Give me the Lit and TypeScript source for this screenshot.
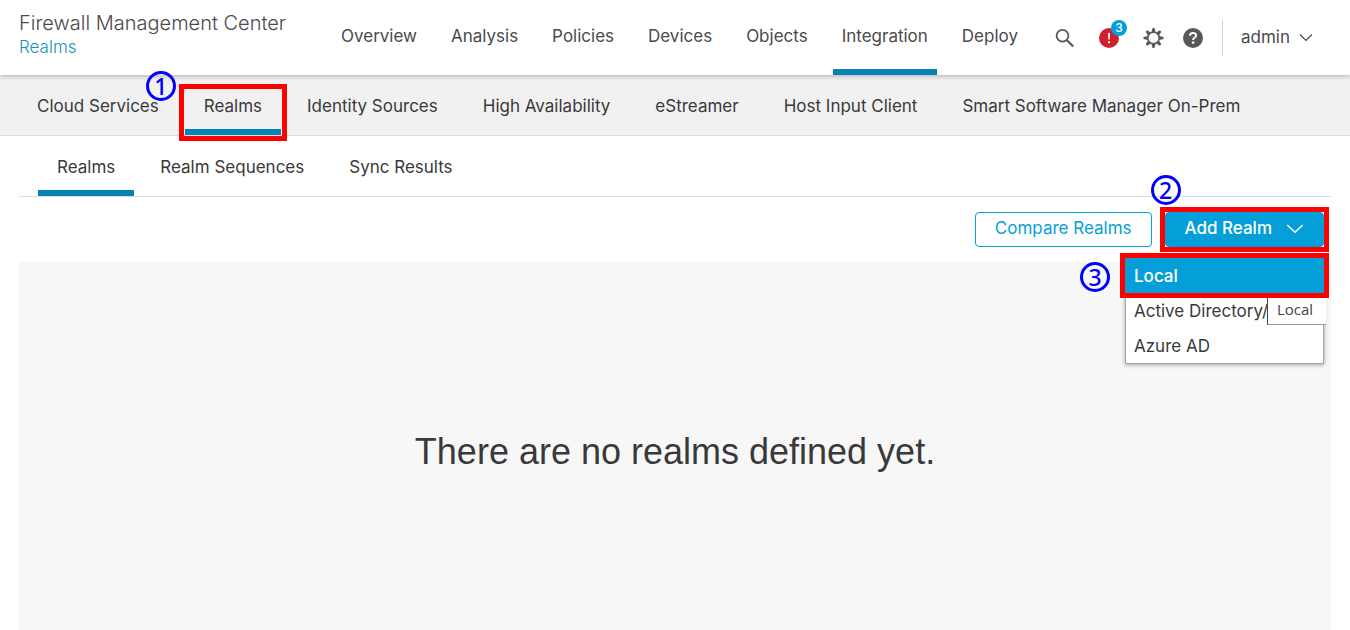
import { LitElement, html, css, svg } from "lit";
import { customElement, property, state } from "lit/decorators.js";
import { classMap } from "lit/directives/class-map.js";

const chevron = svg`<path d="M1 2.5 L7 8.5 L13 2.5" fill="none" stroke="currentColor" stroke-width="1.2"/>`;

const gearTeeth = [0, 45, 90, 135, 180, 225, 270, 315];

/** Red outline with a circled step number, laid over the control that it wraps. */
@customElement("step-mark")
export class StepMark extends LitElement {
  @property({ type: Number }) step = 1;

  static styles = css`
    :host {
      position: absolute;
      inset: -5px;
      z-index: 3;
      box-sizing: border-box;
      border: 5px solid #f00;
      pointer-events: none;
    }
    .number {
      position: absolute;
      left: var(--number-left, 0);
      top: var(--number-top, 0);
      display: flex;
      align-items: center;
      justify-content: center;
      box-sizing: border-box;
      width: 30px;
      height: 30px;
      border: 3px solid #00f;
      border-radius: 50%;
      color: #00f;
      font: 500 23px/24px "Noto Sans", "Open Sans", sans-serif;
    }
  `;

  render() {
    return html`<span class="number">${this.step}</span>`;
  }
}

@customElement("app-root")
export class AppRoot extends LitElement {
  @state() private menuOpen = true;

  private mainNav = ["Overview", "Analysis", "Policies", "Devices", "Objects", "Integration", "Deploy"];
  private subNav = [
    "Cloud Services",
    "Realms",
    "Identity Sources",
    "High Availability",
    "eStreamer",
    "Host Input Client",
    "Smart Software Manager On-Prem",
  ];
  private tabs = ["Realms", "Realm Sequences", "Sync Results"];
  private realmTypes = ["Local", "Active Directory/", "Azure AD"];

  static styles = css`
    :host {
      display: flex;
      flex-direction: column;
      min-height: 100vh;
      background: #fff;
      color: #39393b;
      font: 400 17px/24px Inter, "Liberation Sans", sans-serif;
    }
    a {
      color: inherit;
      text-decoration: none;
      white-space: nowrap;
    }
    button {
      font: inherit;
      color: inherit;
      cursor: pointer;
      white-space: nowrap;
    }
    .header {
      position: relative;
      z-index: 1;
      display: flex;
      height: 75px;
      background: #fff;
      box-shadow: 0 1px 5px rgba(0, 0, 0, 0.28);
      color: #4a4a4c;
    }
    .brand {
      width: 313px;
      padding: 10px 0 0 19px;
      font-weight: 300;
    }
    .product {
      margin: 0;
      font-size: 20px;
      font-weight: 300;
      line-height: 26px;
    }
    .crumb {
      display: block;
      font-size: 17px;
      line-height: 22px;
      color: #1b8fbf;
    }
    .main-nav {
      flex: 1;
      display: flex;
      justify-content: space-between;
    }
    .main-link {
      padding: 24px 9px 0;
    }
    .main-link.active {
      border-bottom: 6px solid #0583b5;
    }
    .tools {
      display: flex;
      align-items: center;
      padding: 0 37px 0 28px;
    }
    .icon-button {
      display: flex;
      position: relative;
      padding: 0;
      border: 0;
      background: none;
      color: #58585b;
    }
    .alert,
    .gear {
      margin-left: 24px;
    }
    .help {
      margin-left: 19px;
    }
    .badge {
      position: absolute;
      left: 12px;
      top: -8px;
      width: 16px;
      height: 16px;
      border-radius: 50%;
      background: #049fd9;
      color: #fff;
      font-size: 12px;
      font-weight: 500;
      line-height: 16px;
      text-align: center;
    }
    .user {
      display: flex;
      align-items: center;
      gap: 9px;
      height: 36px;
      margin-left: 19px;
      padding: 0 0 2px 18px;
      border: 0;
      border-left: 1px solid #d2d2d4;
      background: none;
    }
    .sub-nav {
      display: flex;
      gap: 7px;
      height: 60px;
      padding: 0 18px;
      border-bottom: 1px solid #dcdcdd;
      background: #f1f1f2;
    }
    .sub-link {
      position: relative;
      box-sizing: border-box;
      padding: 19px 19px 0;
    }
    .sub-link.active,
    .tab.active {
      border-bottom: 6px solid #0583b5;
    }
    .sub-mark {
      inset: 9px -6px -12px;
      --number-left: -38px;
      --number-top: -18px;
    }
    .content {
      flex: 1;
      display: flex;
      flex-direction: column;
      padding: 0 19px;
    }
    .tabs {
      display: flex;
      gap: 7px;
      height: 60px;
      padding: 0 19px;
      border-bottom: 1px solid #dcdcdd;
    }
    .tab {
      box-sizing: border-box;
      padding: 19px 19px 0;
    }
    .toolbar {
      display: flex;
      justify-content: flex-end;
      gap: 13px;
      padding: 15px 7px;
    }
    .action {
      position: relative;
      display: flex;
      align-items: center;
      box-sizing: border-box;
      height: 35px;
      padding: 0 19px 3px;
      border: 1px solid #049fd9;
      border-radius: 4px;
      background: #fff;
      color: #049fd9;
    }
    .action.primary {
      gap: 14px;
      background: #049fd9;
      color: #fff;
      font-weight: 500;
    }
    .menu-anchor {
      position: relative;
    }
    .add-mark {
      --number-left: -14px;
      --number-top: -37px;
    }
    .menu {
      position: absolute;
      z-index: 2;
      right: 0;
      top: 46px;
      width: 199px;
      margin: 0;
      padding: 0 0 1px;
      box-sizing: border-box;
      list-style: none;
      background: #fff;
      box-shadow: 0 0 0 1px #a4a4a6 inset, 0 1px 4px rgba(0, 0, 0, 0.35);
    }
    .option {
      position: relative;
    }
    .option-button {
      display: block;
      width: 100%;
      height: 35px;
      padding: 0 9px;
      border: 0;
      background: none;
      text-align: left;
    }
    .option-button.active {
      background: #049fd9;
      color: #fff;
      font-weight: 500;
    }
    .option-mark {
      --number-left: -45px;
      --number-top: 4px;
    }
    .tooltip {
      position: absolute;
      z-index: 2;
      left: 142px;
      top: 40px;
      box-sizing: border-box;
      width: 59px;
      height: 27px;
      padding-left: 9px;
      border-left: 1px solid #444;
      border-bottom: 1px solid #999;
      background: #fff;
      color: #444;
      font: 400 15px/22px "Open Sans", "Noto Sans", sans-serif;
    }
    .panel {
      flex: 1;
      background: #f7f7f8;
    }
    .empty {
      margin: 166px 0 0;
      font-family: "Liberation Sans", sans-serif;
      font-size: 36px;
      line-height: 48px;
      text-align: center;
    }
  `;

  private toggleMenu() {
    this.menuOpen = !this.menuOpen;
  }

  private renderTools() {
    return html`
      <div class="tools">
        <button class="icon-button" aria-label="Search">
          <svg width="20" height="20" viewBox="0 0 20 20" fill="none" stroke="currentColor">
            <circle cx="7.5" cy="7.7" r="5.9" stroke-width="1.8" />
            <path d="M11.7 12.1 L18.2 18.5" stroke-width="2.1" />
          </svg>
        </button>
        <button class="icon-button alert" aria-label="Notifications">
          <svg width="20" height="20" viewBox="0 0 20 20">
            <circle cx="10" cy="10" r="10" fill="#cf2030" />
            <path d="M9 5h2l-.3 6.600h-1.400z" fill="#fff" />
            <circle cx="10" cy="14.2" r="1.1" fill="#fff" />
          </svg>
          <span class="badge">3</span>
        </button>
        <button class="icon-button gear" aria-label="Settings">
          <svg width="21" height="20" viewBox="-10.5 -10 21 20" fill="currentColor">
            <circle r="5.7" fill="none" stroke="currentColor" stroke-width="1.6" />
            ${gearTeeth.map(
              (angle) => svg`<path d="M-2.1 -5.8 L-1 -10 H1 L2.1 -5.8 Z" transform="rotate(${angle})"/>`,
            )}
          </svg>
        </button>
        <button class="icon-button help" aria-label="Help">
          <svg width="20" height="20" viewBox="0 0 20 20">
            <circle cx="10" cy="10" r="10" fill="currentColor" />
            <path
              d="M7 7.7 C7 5.7 8.3 4.9 10 4.9 C11.9 4.9 13.1 6 13.1 7.5 C13.1 9.6 10.1 9.5 10.1 12"
              fill="none"
              stroke="#fff"
              stroke-width="2"
            />
            <circle cx="10.1" cy="14.6" r="1.3" fill="#fff" />
          </svg>
        </button>
        <button class="user">
          admin
          <svg width="14" height="10" viewBox="0 0 14 10">${chevron}</svg>
        </button>
      </div>
    `;
  }

  private renderMenu() {
    return html`
      <ul class="menu">
        ${this.realmTypes.map(
          (name, i) => html`
            <li class="option">
              <button class=${classMap({ "option-button": true, active: i === 0 })}>${name}</button>
              ${i === 0
                ? html`<step-mark class="option-mark" .step=${3}></step-mark>
                    <span class="tooltip" role="tooltip">Local</span>`
                : ""}
            </li>
          `,
        )}
      </ul>
    `;
  }

  render() {
    return html`
      <header class="header">
        <div class="brand">
          <h1 class="product">Firewall Management Center</h1>
          <a class="crumb" href="#realms">Realms</a>
        </div>
        <nav class="main-nav" aria-label="Main">
          ${this.mainNav.map(
            (name) => html`<a
              class=${classMap({ "main-link": true, active: name === "Integration" })}
              href="#"
              >${name}</a
            >`,
          )}
        </nav>
        ${this.renderTools()}
      </header>
      <nav class="sub-nav" aria-label="Integration">
        ${this.subNav.map(
          (name) => html`<a class=${classMap({ "sub-link": true, active: name === "Realms" })} href="#"
            >${name}${name === "Realms" ? html`<step-mark class="sub-mark" .step=${1}></step-mark>` : ""}</a
          >`,
        )}
      </nav>
      <main class="content">
        <nav class="tabs" aria-label="Realms">
          ${this.tabs.map(
            (name, i) => html`<a class=${classMap({ tab: true, active: i === 0 })} href="#">${name}</a>`,
          )}
        </nav>
        <div class="toolbar">
          <button class="action">Compare Realms</button>
          <div class="menu-anchor">
            <button class="action primary" aria-expanded=${this.menuOpen} @click=${this.toggleMenu}>
              Add Realm
              <svg width="18" height="12" viewBox="0 0 14 10" preserveAspectRatio="none">${chevron}</svg>
            </button>
            <step-mark class="add-mark" .step=${2}></step-mark>
            ${this.menuOpen ? this.renderMenu() : ""}
          </div>
        </div>
        <section class="panel">
          <p class="empty">There are no realms defined yet.</p>
        </section>
      </main>
    `;
  }
}
